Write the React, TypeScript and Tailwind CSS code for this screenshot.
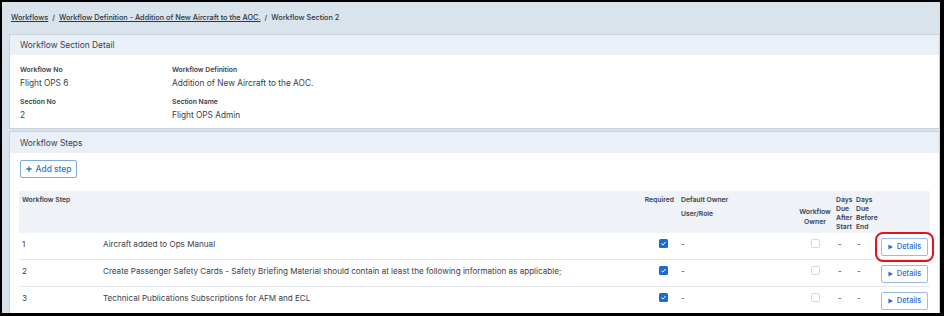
import React from "react";

const steps = [
  { no: 1, name: "Aircraft added to Ops Manual", highlight: true },
  {
    no: 2,
    name: "Create Passenger Safety Cards - Safety Briefing Material should contain at least the following information as applicable;",
    highlight: false,
  },
  { no: 3, name: "Technical Publications Subscriptions for AFM and ECL", highlight: false },
];

const cols = "grid grid-cols-[81px_530px_48px_119px_36px_20px_23px_54px]";

function CheckedBox() {
  return (
    <span className="flex h-[9px] w-[9px] items-center justify-center rounded-[1.5px] bg-[#1b6bd6]">
      <svg viewBox="0 0 10 10" className="h-[7px] w-[7px]">
        <path d="M2 5.2 L4.2 7.3 L8 2.8" fill="none" stroke="white" strokeWidth="1.4" />
      </svg>
    </span>
  );
}

function EmptyBox() {
  return <span className="block h-[9px] w-[9px] rounded-[1.5px] border border-[#d4d7db] bg-white" />;
}

function DetailsButton({ highlight }: { highlight: boolean }) {
  return (
    <button
      className={`flex h-[18px] w-[47px] items-center justify-center gap-[4px] rounded-[2px] border border-[#9bbbe9] bg-white text-[7.5px] font-medium text-[#2a6fd0] ${
        highlight ? "outline-[2.5px] outline-[#e5121b] outline-offset-[4px]" : ""
      }`}
    >
      <svg viewBox="0 0 6 6" className="h-[6px] w-[5px]">
        <path d="M0.5 0 L6 3 L0.5 6 Z" fill="#2a6fd0" />
      </svg>
      Details
    </button>
  );
}

export default function App() {
  return (
    <div
      className="h-[316px] w-[944px] overflow-hidden border-t-2 border-l-2 border-r-4 border-b-[3px] border-black bg-[#d9e3ec] text-[#3a404a]"
      style={{ fontFamily: "Inter, 'Noto Sans', sans-serif" }}
    >
      <div className="pl-[7px]">
        {/* Breadcrumb */}
        <div className="flex h-[32px] items-center gap-[4px] pl-[2px] text-[7.3px] font-medium text-[#2f3540]">
          <span className="underline">Workflows</span>
          <span>/</span>
          <span className="underline">Workflow Definition - Addition of New Aircraft to the AOC.</span>
          <span>/</span>
          <span>Workflow Section 2</span>
        </div>

        {/* Section detail card */}
        <div className="border border-[#cbd4de] bg-white">
          <div className="flex h-[20px] items-center bg-[#eaf0f8] pl-[10px] text-[8.4px] text-[#3a404a]">
            Workflow Section Detail
          </div>
          <div className="grid grid-cols-[152px_1fr] px-[10px] pt-[10px] pb-[7px]">
            <div>
              <div className="text-[6.8px] font-semibold leading-[9px]">Workflow No</div>
              <div className="mt-[3px] text-[8.3px] leading-[12px]">Flight OPS 6</div>
            </div>
            <div>
              <div className="text-[6.8px] font-semibold leading-[9px]">Workflow Definition</div>
              <div className="mt-[3px] text-[8.3px] leading-[12px]">Addition of New Aircraft to the AOC.</div>
            </div>
            <div className="mt-[8px]">
              <div className="text-[6.8px] font-semibold leading-[9px]">Section No</div>
              <div className="mt-[3px] text-[8.3px] leading-[12px]">2</div>
            </div>
            <div className="mt-[8px]">
              <div className="text-[6.8px] font-semibold leading-[9px]">Section Name</div>
              <div className="mt-[3px] text-[8.3px] leading-[12px]">Flight OPS Admin</div>
            </div>
          </div>
        </div>

        {/* Workflow steps card */}
        <div className="mt-[2px] border border-[#cbd4de] bg-white">
          <div className="flex h-[21px] items-center bg-[#eaf0f8] pl-[10px] pt-[1px] text-[8.4px] text-[#3a404a]">
            Workflow Steps
          </div>
          <div className="pl-[9px] pr-[8px] pt-[7px]">
            <button className="ml-[1px] flex h-[18px] w-[57px] items-center justify-center gap-[4px] rounded-[2px] border border-[#7ea8e4] text-[8.4px] font-medium text-[#2470d6]">
              <svg viewBox="0 0 8 8" className="h-[6px] w-[6px]">
                <path d="M4 0.5 V7.5 M0.5 4 H7.5" stroke="#2470d6" strokeWidth="1.7" />
              </svg>
              Add step
            </button>

            <div className="mt-[13px] w-[911px]">
              <div className={`${cols} h-[42px] bg-[#eff3f8] text-[6.8px] font-semibold leading-[9px] text-[#3a404a]`}>
                <div className="pl-[3px] pt-[4px]">Workflow Step</div>
                <div />
                <div className="pt-[4px] pr-[4px] text-right">Required</div>
                <div className="pl-[3px] pt-[4px]">
                  <div>Default Owner</div>
                  <div className="mt-[5px]">User/Role</div>
                </div>
                <div className="flex flex-col justify-end pb-[6px] text-center leading-[10px]">
                  <div>Workflow</div>
                  <div>Owner</div>
                </div>
                <div className="pl-[3px] pt-[4px]">
                  Days
                  <br />
                  Due
                  <br />
                  After
                  <br />
                  Start
                </div>
                <div className="pl-[3px] pt-[4px]">
                  Days
                  <br />
                  Due
                  <br />
                  Before
                  <br />
                  End
                </div>
                <div />
              </div>

              {steps.map((s) => (
                <div
                  key={s.no}
                  className={`${cols} h-[27px] border-b border-[#e4e8ee] text-[8.1px] leading-[10px] text-[#3a404a]`}
                >
                  <div className="pl-[3px] pt-[6px]">{s.no}</div>
                  <div className="pl-[3px] pt-[6px] whitespace-nowrap">{s.name}</div>
                  <div className="flex justify-end pr-[10px] pt-[6px]">
                    <CheckedBox />
                  </div>
                  <div className="pl-[3px] pt-[6px]">-</div>
                  <div className="flex justify-center pt-[6px]">
                    <EmptyBox />
                  </div>
                  <div className="pl-[5px] pt-[6px]">-</div>
                  <div className="pl-[4px] pt-[6px]">-</div>
                  <div className="pl-[5px] pt-[5px]">
                    <DetailsButton highlight={s.highlight} />
                  </div>
                </div>
              ))}
            </div>
          </div>
        </div>
      </div>
    </div>
  );
}
